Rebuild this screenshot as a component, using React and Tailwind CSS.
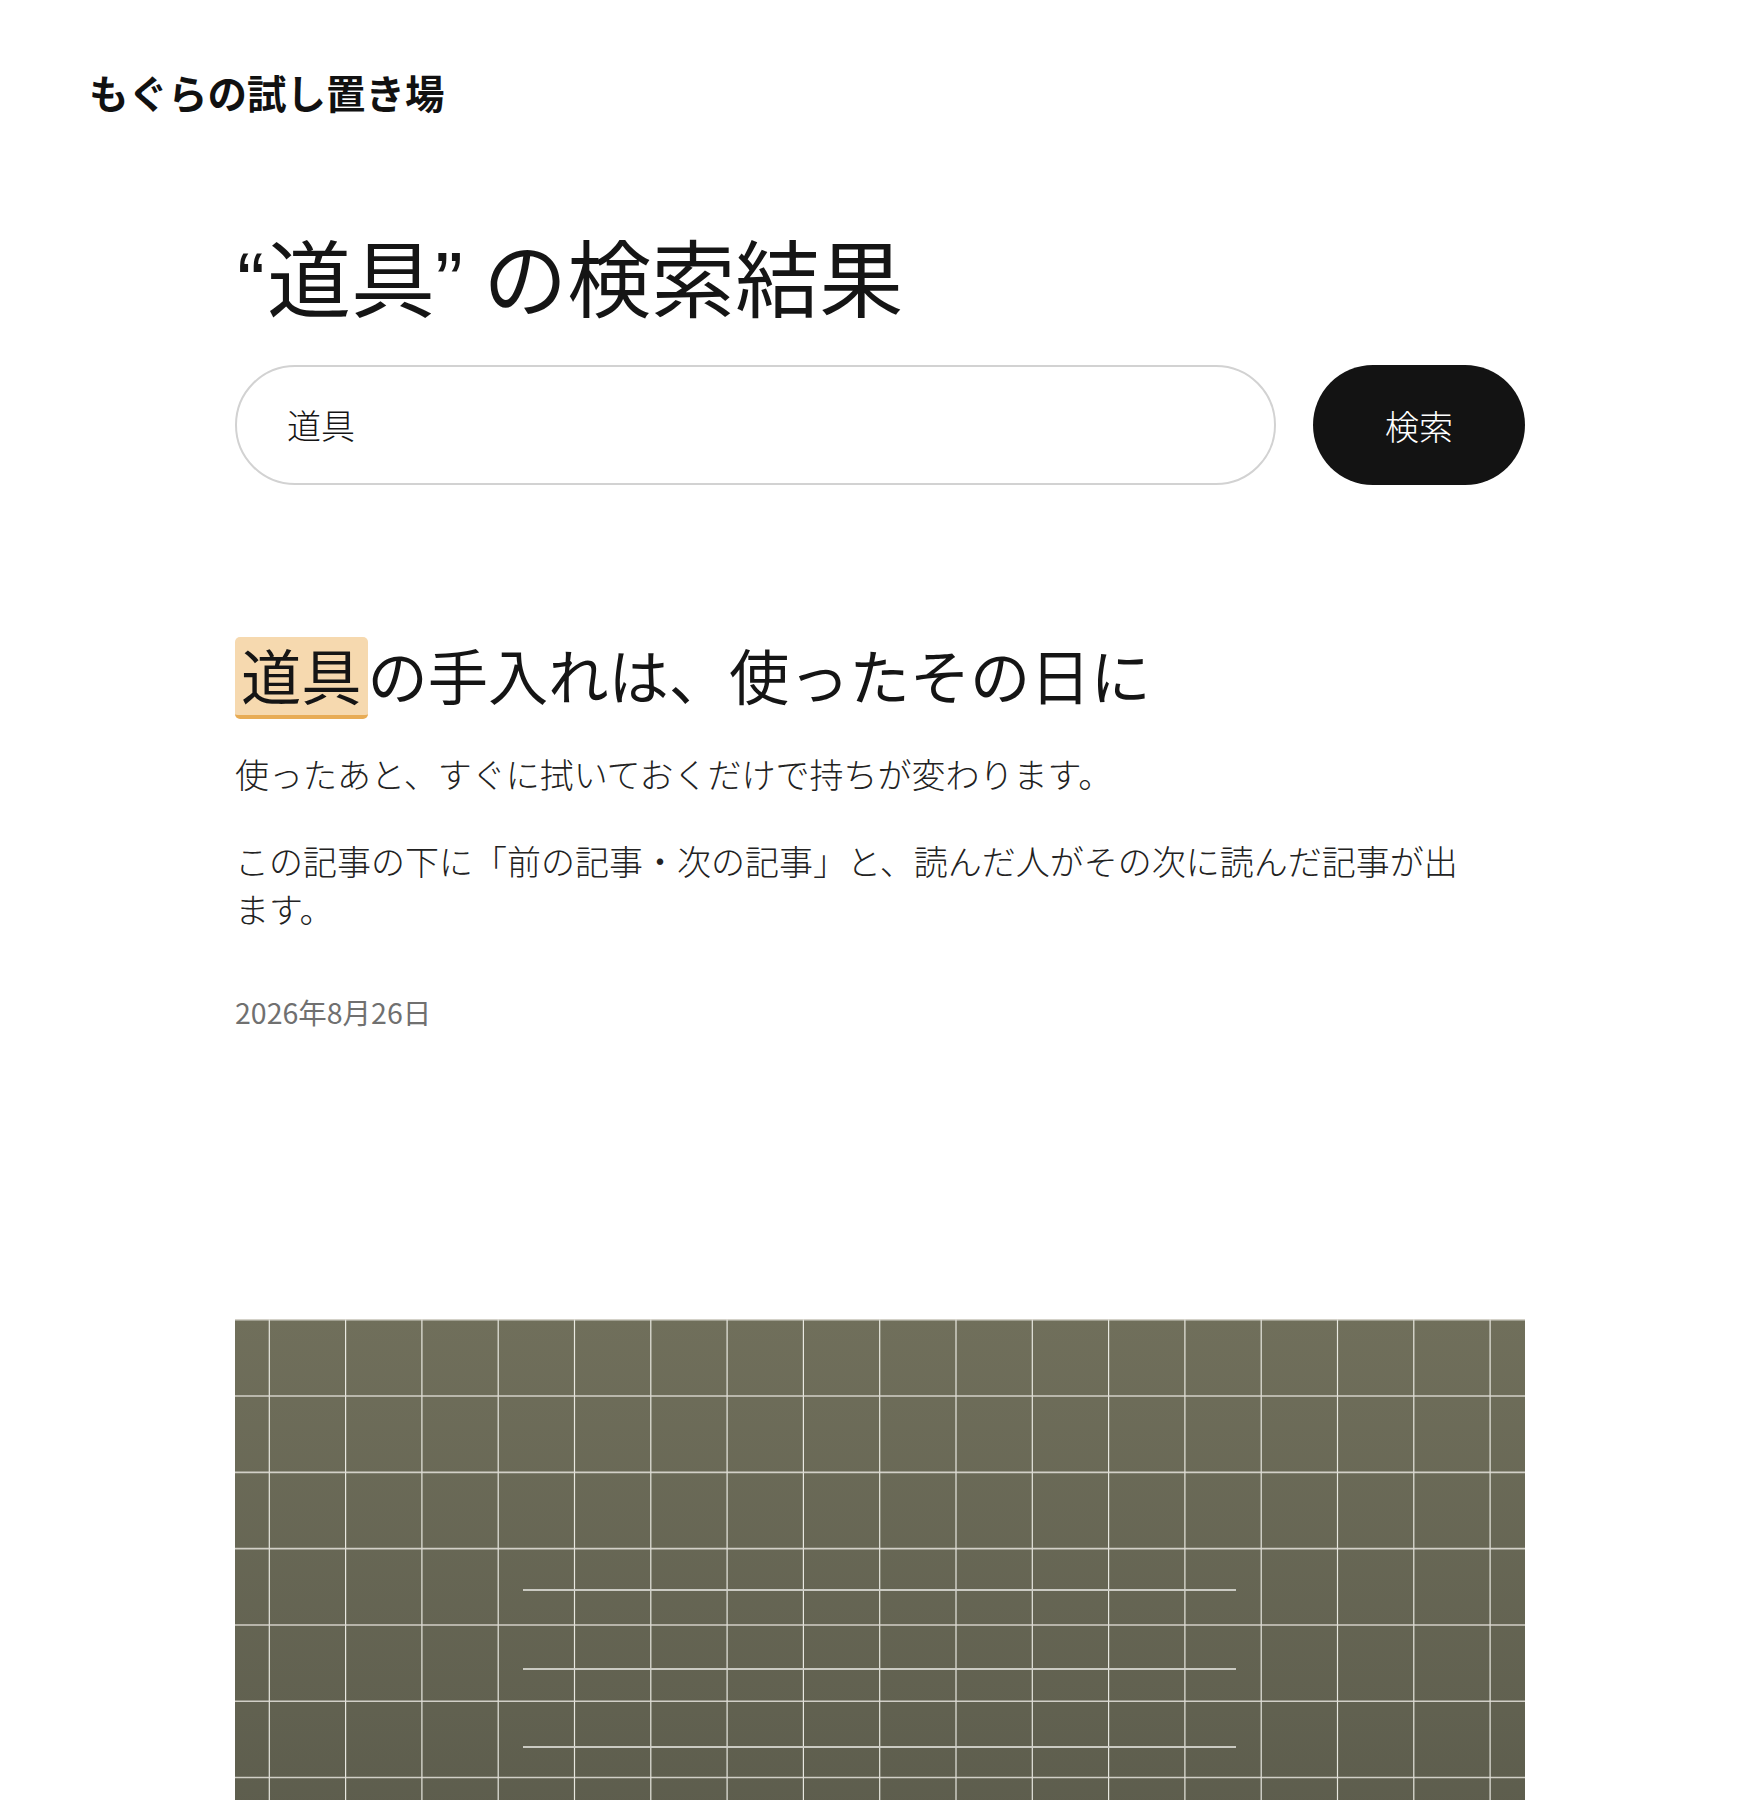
import React from "react";

const FONT = { fontFamily: '"Noto Sans CJK JP", "Noto Sans", sans-serif' };

function GridPicture() {
  const W = 1290;
  const H = 860;
  const step = 76.3;
  const vx = [];
  for (let x = 34.3; x < W; x += step) vx.push(x);
  const hy = [];
  for (let y = 0.75; y < H; y += step) hy.push(y);
  return (
    <svg width={W} height={H} viewBox={`0 0 ${W} ${H}`} className="block">
      <defs>
        <linearGradient id="bg" x1="0" y1="0" x2="0" y2="1">
          <stop offset="0" stopColor="#706f5b" />
          <stop offset="1" stopColor="#4f5043" />
        </linearGradient>
      </defs>
      <rect x="0" y="0" width={W} height={H} fill="url(#bg)" />
      {vx.map((x, i) => (
        <line key={"v" + i} x1={x} y1="0" x2={x} y2={H} stroke="#f6f6f0" strokeOpacity="0.9" strokeWidth="1.2" />
      ))}
      {hy.map((y, i) => (
        <line key={"h" + i} x1="0" y1={y} x2={W} y2={y} stroke="#dedcd4" strokeOpacity="0.9" strokeWidth="1.6" />
      ))}
      {[271, 350, 428].map((y, i) => (
        <line key={"t" + i} x1="288" y1={y} x2="1001" y2={y} stroke="#d0d0c8" strokeOpacity="0.95" strokeWidth="2" />
      ))}
    </svg>
  );
}

export default function App() {
  return (
    <div className="min-h-screen bg-white text-[#141414]" style={FONT}>
      <header className="pl-[89px] pt-[72px]">
        <a className="block text-[39.5px] font-bold leading-[39px] text-[#111]">もぐらの試し置き場</a>
      </header>

      <main className="mx-auto w-[1290px]">
        <h1 className="mt-[122px] h-[84px] whitespace-nowrap text-[84px] font-normal leading-[84px] text-[#151515]">
          <span className="pl-[2px] pr-[2px] font-['Liberation_Sans',sans-serif]">“</span>道具<span className="-mr-[3px] font-['Liberation_Sans',sans-serif]">” </span>の検索結果
        </h1>

        <form className="mt-[48px] flex gap-[37px]" onSubmit={(e) => e.preventDefault()}>
          <div className="flex h-[120px] flex-1 items-center rounded-full border-2 border-[#d2d2d2] pl-[50px]">
            <span className="text-[34px] font-light leading-none text-[#151515]">道具</span>
          </div>
          <button className="flex h-[120px] w-[212px] items-center justify-center rounded-full bg-[#131313] text-[34px] font-light text-white">
            検索
          </button>
        </form>

        <article className="mt-[152px]">
          <h2 className="flex items-center text-[60.25px] font-normal leading-none text-[#151515]">
            <span className="flex h-[82px] items-center rounded-[5px] border-b-[4px] border-[#e8ac55] bg-[#f6d9af] px-[6px] pb-[3px]">道具</span>
            <span className="pb-[7px]">の手入れは、使ったその日に</span>
          </h2>
          <div className="mt-[31px] max-w-[1232px] text-[34px] font-light leading-[48px] text-[#222]">
            <p>使ったあと、すぐに拭いておくだけで持ちが変わります。</p>
            <p className="mt-[39px]">この記事の下に「前の記事・次の記事」と、読んだ人がその次に読んだ記事が出ます。</p>
          </div>
          <p className="mt-[59px] text-[28.5px] leading-[40px] text-[#707070]">2026年8月26日</p>

          <div className="mt-[287px]">
            <GridPicture />
          </div>
        </article>
      </main>
    </div>
  );
}
